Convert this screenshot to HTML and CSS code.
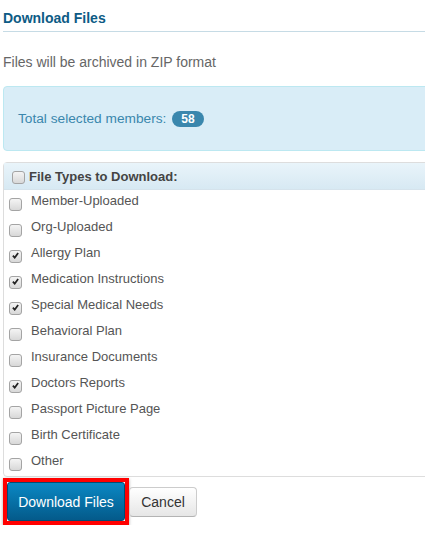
FILE: index.html
```html
<!DOCTYPE html>
<html>
<head>
<meta charset="utf-8">
<link rel="stylesheet" href="styles.css">
</head>
<body>
<div class="page">
  <h3 class="title">Download Files</h3>
  <p class="note">Files will be archived in ZIP format</p>
  <div class="alert">Total selected members: <span class="badge">58</span></div>
  <div class="panel">
    <div class="panel-head"><span class="cb head-cb"></span>File Types to Download:</div>
    <div class="panel-body">
      <div class="row"><span class="cb"></span><span class="lbl">Member-Uploaded</span></div>
      <div class="row"><span class="cb"></span><span class="lbl">Org-Uploaded</span></div>
      <div class="row"><span class="cb on"></span><span class="lbl">Allergy Plan</span></div>
      <div class="row"><span class="cb on"></span><span class="lbl">Medication Instructions</span></div>
      <div class="row"><span class="cb on"></span><span class="lbl">Special Medical Needs</span></div>
      <div class="row"><span class="cb"></span><span class="lbl">Behavioral Plan</span></div>
      <div class="row"><span class="cb"></span><span class="lbl">Insurance Documents</span></div>
      <div class="row"><span class="cb on"></span><span class="lbl">Doctors Reports</span></div>
      <div class="row"><span class="cb"></span><span class="lbl">Passport Picture Page</span></div>
      <div class="row"><span class="cb"></span><span class="lbl">Birth Certificate</span></div>
      <div class="row"><span class="cb"></span><span class="lbl">Other</span></div>
    </div>
  </div>
  <div class="actions">
    <div class="highlight"><button class="btn btn-primary">Download Files</button></div>
    <button class="btn btn-default">Cancel</button>
  </div>
</div>
</body>
</html>
```
FILE: styles.css
```css
html, body { margin: 0; padding: 0; background: #fff; overflow: hidden; }
body { font-family: "Liberation Sans", Arial, sans-serif; font-size: 13px; color: #555; }
.page { width: 470px; padding-left: 3px; }
.title {
  margin: 0; padding-top: 10px; height: 21px;
  font-size: 14px; font-weight: bold; color: #0d5b85; line-height: 16px;
  border-bottom: 1px solid #c6dbe5;
}
.note { margin: 0; padding-top: 22px; height: 32px; font-size: 14px; color: #666; line-height: 16px; }
.alert {
  margin-top: 0;
  background: #d9edf7; border: 1px solid #bce8f1; border-radius: 4px;
  color: #3a87ad; font-size: 13.7px; line-height: 17px;
  padding: 23px 14px 23px 14px;
  display: flex; align-items: center; gap: 6px;
}
.badge {
  display: inline-block; background: #3a87ad; color: #fff; font-weight: bold;
  font-size: 12px; line-height: 16px; height: 16px; padding: 0 9px; border-radius: 9px;
}
.panel { margin-top: 11px; border: 1px solid #ddd; border-radius: 4px 0 0 4px; }
.panel-head {
  height: 26px; display: flex; align-items: center;
  background: linear-gradient(#e9f4fa, #d7e9f3);
  border-bottom: 1px solid #d5e3ec;
  font-weight: bold; font-size: 13px; color: #444;
  padding-left: 8px;
}
.panel-body { padding: 0; }
.row { height: 26px; display: flex; align-items: center; padding-left: 5px; }
.lbl { color: #555; font-size: 13px; margin-top: -6px; }
.cb {
  width: 11px; height: 11px; border: 1px solid #a4a4a4; border-radius: 3px;
  background: linear-gradient(#f4f4f4, #d8d8d8);
  margin-right: 9px; margin-top: 3px; position: relative; flex: none;
}
.head-cb { margin-right: 4px; margin-top: 2px; }
.cb.on::after {
  content: ""; position: absolute; left: 2px; top: 1px;
  width: 7px; height: 7px;
  background: url("data:image/svg+xml,%3Csvg xmlns='http://www.w3.org/2000/svg' viewBox='0 0 8 8'%3E%3Cpath d='M1 4.2 L3.1 6.5 L7 1.2' fill='none' stroke='%23222' stroke-width='2'/%3E%3C/svg%3E") no-repeat;
  background-size: 7px 7px;
}
.actions { display: flex; align-items: center; margin-top: 1px; }
.highlight {
  border: 4px solid #f00; box-shadow: 0 1px 3px rgba(0,0,0,0.35);
}
.btn {
  font-family: "Liberation Sans", Arial, sans-serif; font-size: 14px;
  border-radius: 4px; cursor: pointer; padding: 0;
}
.btn-primary {
  display: block; width: 118px; height: 39px; color: #fff;
  background: linear-gradient(#0a88c4, #045a8a);
  border: 1px solid #034b73; border-radius: 3px;
}
.btn-default {
  width: 68px; height: 30px; color: #333;
  background: linear-gradient(#fff, #e6e6e6);
  border: 1px solid #ccc; border-bottom-color: #b3b3b3;
}
```
